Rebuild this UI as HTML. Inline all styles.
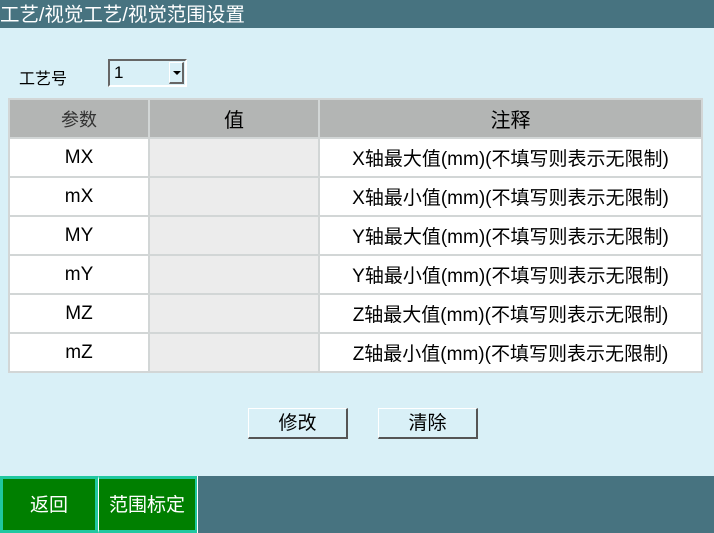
<!DOCTYPE html>
<html><head><meta charset="utf-8"><style>
*{margin:0;padding:0;box-sizing:border-box}
body{width:714px;height:533px;background:#d9f0f7;position:relative;overflow:hidden;font-family:"Liberation Sans","Noto Sans CJK SC",sans-serif;color:#000}
.a{position:absolute}
.top{left:0;top:0;width:714px;height:28px;background:#477380;color:#fff;font-size:19.5px;line-height:30px;white-space:nowrap}
table{position:absolute;left:8px;top:98px;border-collapse:collapse;width:695px}
td{border:2px solid #d2d6d6;height:39px;text-align:center;font-size:19px;background:#fff}
th{border:2px solid #d2d6d6;height:39px;background:#b3b5b4;font-weight:normal;font-size:20px}
td.v{background:#ececec}
.btn{width:100px;height:31px;background:#d9f0f7;border:1px solid #fff;border-right:2px solid #555;border-bottom:2px solid #555;text-align:center;font-size:19px;line-height:30px}
.bar{left:0;top:476px;width:714px;height:57px;background:#477380}
.g{top:476px;height:57px;background:#007f00;border:3px solid #20c8a0;color:#fff;font-size:19px;text-align:center;line-height:53px}
</style></head><body>
<div class="a top">工艺/视觉工艺/视觉范围设置</div>
<div class="a" style="left:19px;top:65px;font-size:16px">工艺号</div>
<div class="a" style="left:108px;top:59px;width:79px;height:28px;border:2px solid #666;border-right-color:#fff;border-bottom-color:#fff;background:#d9f0f7"><span class="a" style="left:4px;top:2px;font-size:17px">1</span><div class="a" style="right:1px;top:1px;width:15px;height:22px;background:#d9f0f7;border:1px solid #fff;border-right:2px solid #666;border-bottom:2px solid #666"><div class="a" style="left:3px;top:8px;border-left:4px solid transparent;border-right:4px solid transparent;border-top:4px solid #000"></div></div></div>
<table>
<tr><th style="width:140px;font-size:18px;color:#333">参数</th><th style="width:170px">值</th><th>注释</th></tr>
<tr><td>MX</td><td class="v"></td><td>X轴最大值(mm)(不填写则表示无限制)</td></tr>
<tr><td>mX</td><td class="v"></td><td>X轴最小值(mm)(不填写则表示无限制)</td></tr>
<tr><td>MY</td><td class="v"></td><td>Y轴最大值(mm)(不填写则表示无限制)</td></tr>
<tr><td>mY</td><td class="v"></td><td>Y轴最小值(mm)(不填写则表示无限制)</td></tr>
<tr><td>MZ</td><td class="v"></td><td>Z轴最大值(mm)(不填写则表示无限制)</td></tr>
<tr><td>mZ</td><td class="v"></td><td>Z轴最小值(mm)(不填写则表示无限制)</td></tr>
</table>
<div class="a btn" style="left:248px;top:408px">修改</div>
<div class="a btn" style="left:378px;top:408px">清除</div>
<div class="a bar"></div>
<div class="a g" style="left:0;width:98px">返回</div>
<div class="a g" style="left:98px;width:100px;border-left-color:#fff;border-left-width:1px">范围标定</div>
<div class="a" style="left:197px;top:476px;width:1px;height:57px;background:#fff"></div>
</body></html>
